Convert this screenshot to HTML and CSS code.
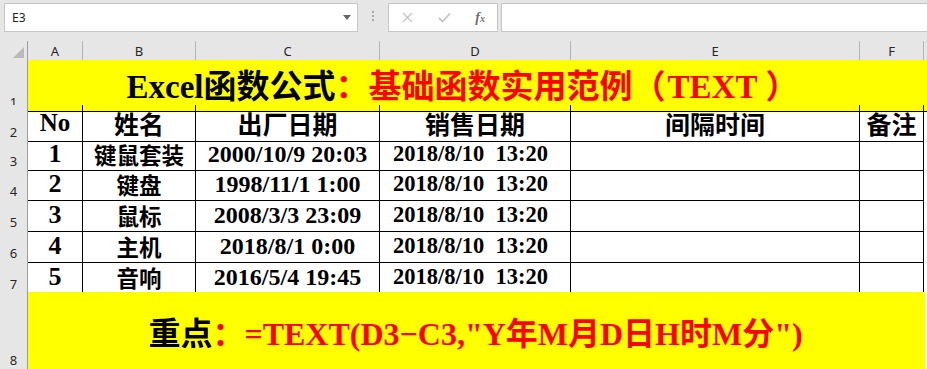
FILE: index.html
```html
<!DOCTYPE html>
<html lang="zh-CN">
<head>
    <meta charset="UTF-8">
    <title>Excel TEXT</title>
    <link rel="stylesheet" href="styles.css">
</head>
<body>
    <div class="toolbar">
        <div class="namebox">
            <span>E3</span>
            <svg class="caret" width="8" height="5" viewBox="0 0 8 5"><polygon points="0,0 8,0 4,5" fill="#666"/></svg>
        </div>
        <div class="grip"><i></i><i></i><i></i></div>
        <div class="fbuttons">
            <svg width="11" height="11" viewBox="0 0 11 11"><path d="M1 1 L10 10 M10 1 L1 10" stroke="#c4c4c4" stroke-width="1.4" fill="none"/></svg>
            <svg width="13" height="11" viewBox="0 0 13 11"><path d="M1 6 L4.5 9.5 L12 1.5" stroke="#c4c4c4" stroke-width="1.8" fill="none"/></svg>
            <span class="fx"><i>f</i><em>x</em></span>
        </div>
        <div class="formula"></div>
    </div>

    <div class="sheet">
        <div class="row colhead">
            <div class="corner"><svg width="11" height="11" viewBox="0 0 11 11"><polygon points="11,0 11,11 0,11" fill="#b9b9b9"/></svg></div>
            <div class="ch">A</div>
            <div class="ch">B</div>
            <div class="ch">C</div>
            <div class="ch">D</div>
            <div class="ch">E</div>
            <div class="ch">F</div>
            <div class="ch rest"></div>
        </div>

        <div class="row r-title">
            <div class="rh">1</div>
            <div class="banner title">Excel函数公式<span class="red">：基础函数实用范例（<span class="inner">TEXT</span>）</span></div>
        </div>

        <div class="row r-head">
            <div class="rh">2</div>
            <div class="cell">No</div>
            <div class="cell">姓名</div>
            <div class="cell">出厂日期</div>
            <div class="cell">销售日期</div>
            <div class="cell">间隔时间</div>
            <div class="cell">备注</div>
            <div class="rest"></div>
        </div>

        <div class="row r-data">
            <div class="rh">3</div>
            <div class="cell num">1</div>
            <div class="cell name">键鼠套装</div>
            <div class="cell made">2000/10/9 20:03</div>
            <div class="cell sold">2018/8/10&nbsp; 13:20</div>
            <div class="cell"></div>
            <div class="cell"></div>
            <div class="rest"></div>
        </div>
        <div class="row r-data">
            <div class="rh">4</div>
            <div class="cell num">2</div>
            <div class="cell name">键盘</div>
            <div class="cell made">1998/11/1 1:00</div>
            <div class="cell sold">2018/8/10&nbsp; 13:20</div>
            <div class="cell"></div>
            <div class="cell"></div>
            <div class="rest"></div>
        </div>
        <div class="row r-data">
            <div class="rh">5</div>
            <div class="cell num">3</div>
            <div class="cell name">鼠标</div>
            <div class="cell made">2008/3/3 23:09</div>
            <div class="cell sold">2018/8/10&nbsp; 13:20</div>
            <div class="cell"></div>
            <div class="cell"></div>
            <div class="rest"></div>
        </div>
        <div class="row r-data">
            <div class="rh">6</div>
            <div class="cell num">4</div>
            <div class="cell name">主机</div>
            <div class="cell made">2018/8/1 0:00</div>
            <div class="cell sold">2018/8/10&nbsp; 13:20</div>
            <div class="cell"></div>
            <div class="cell"></div>
            <div class="rest"></div>
        </div>
        <div class="row r-data">
            <div class="rh">7</div>
            <div class="cell num">5</div>
            <div class="cell name">音响</div>
            <div class="cell made">2016/5/4 19:45</div>
            <div class="cell sold">2018/8/10&nbsp; 13:20</div>
            <div class="cell"></div>
            <div class="cell"></div>
            <div class="rest"></div>
        </div>

        <div class="row r-note">
            <div class="rh">8</div>
            <div class="banner note">重点<span class="red">：=TEXT(D3−C3,&quot;Y年M月D日H时M分&quot;)</span></div>
        </div>
    </div>
</body>
</html>
```

FILE: styles.css
```css
body {
    margin: 0;
    background-color: white;
    font-family: "Liberation Serif", "Noto Sans CJK SC", serif;
    overflow: hidden;
}

/* Formula bar */
.toolbar {
    height: 41px;
    box-sizing: border-box;
    padding-top: 3px;
    background-color: #e6e6e6;
    display: flex;
    align-items: flex-start;
}

.namebox,
.fbuttons,
.formula {
    height: 29px;
    box-sizing: border-box;
    background-color: #fff;
    border: 1px solid #c6c6c6;
}

.namebox {
    margin-left: 4px;
    width: 354px;
    display: flex;
    align-items: center;
    justify-content: space-between;
    padding: 0 6px 0 7px;
    font: 12px "Noto Sans", sans-serif;
    color: #1e1e1e;
}

.grip {
    width: 2px;
    margin: 8px 14px 0 14px;
    display: flex;
    flex-direction: column;
    gap: 2px;
}

.grip i {
    width: 2px;
    height: 2px;
    background-color: #a8a8a8;
}

.fbuttons {
    width: 110px;
    display: flex;
    align-items: center;
    justify-content: space-between;
    padding: 0 12px 0 13px;
}

.fx {
    font-family: "Liberation Serif", serif;
    color: #6f6f6f;
    font-size: 14px;
    font-weight: bold;
}

.fx em {
    font-size: 10px;
}

.formula {
    flex: 1;
    margin-left: 3px;
    margin-right: -4px;
}

/* Sheet grid */
.row {
    display: grid;
    grid-template-columns: 28px 55px 113px 184px 191px 289px 64px 1fr;
}

.colhead {
    height: 19px;
    background-color: #e6e6e6;
}

.corner,
.ch {
    box-sizing: border-box;
    border-bottom: 1px solid #9e9e9e;
    border-right: 1px solid #b4b4b4;
}

.corner {
    display: flex;
    align-items: flex-end;
    justify-content: flex-end;
    padding: 0 3px 2px 0;
    border-right-color: #9e9e9e;
}

.ch {
    font: 13px "Noto Sans", sans-serif;
    color: #262626;
    text-align: center;
    line-height: 18px;
    padding-top: 1px;
}

.ch.rest {
    border-right: none;
}

.rh {
    box-sizing: border-box;
    background-color: #e6e6e6;
    border-right: 1px solid #9e9e9e;
    border-bottom: 1px solid #c6c6c6;
    font: 13px "Noto Sans", sans-serif;
    color: #262626;
    display: flex;
    align-items: flex-end;
    justify-content: center;
    line-height: 17px;
}

.r-title { height: 45px; }
.r-head { height: 33px; }
.r-data { height: 31px; }
.r-data:nth-child(4) { height: 30px; }
.r-note { height: 78px; }

.banner {
    grid-column: 2 / -1;
    background-color: #ffff00;
    font-size: 32px;
    font-weight: bold;
    display: flex;
    align-items: center;
    justify-content: center;
    padding-right: 2px;
    border-bottom: 1px solid #000;
    box-sizing: border-box;
    white-space: nowrap;
}

.banner.title {
    font-size: 33px;
    padding: 0 30px 3px 0;
}

.inner {
    margin: 0 8px 0 2px;
}

.banner.note {
    border-bottom: none;
    margin-right: 2px;
}

.red {
    color: #ff0000;
}

.cell {
    box-sizing: border-box;
    border-right: 1px solid #000;
    border-bottom: 1px solid #000;
    display: flex;
    align-items: center;
    justify-content: center;
    font-weight: bold;
    white-space: nowrap;
    color: #000;
}

.r-head .cell { font-size: 25px; }
.num { font-size: 26px; }
.name { font-size: 22.5px; }
.made { font-size: 24px; }

.sold {
    font-size: 22.5px;
    padding-right: 9px;
}
```
